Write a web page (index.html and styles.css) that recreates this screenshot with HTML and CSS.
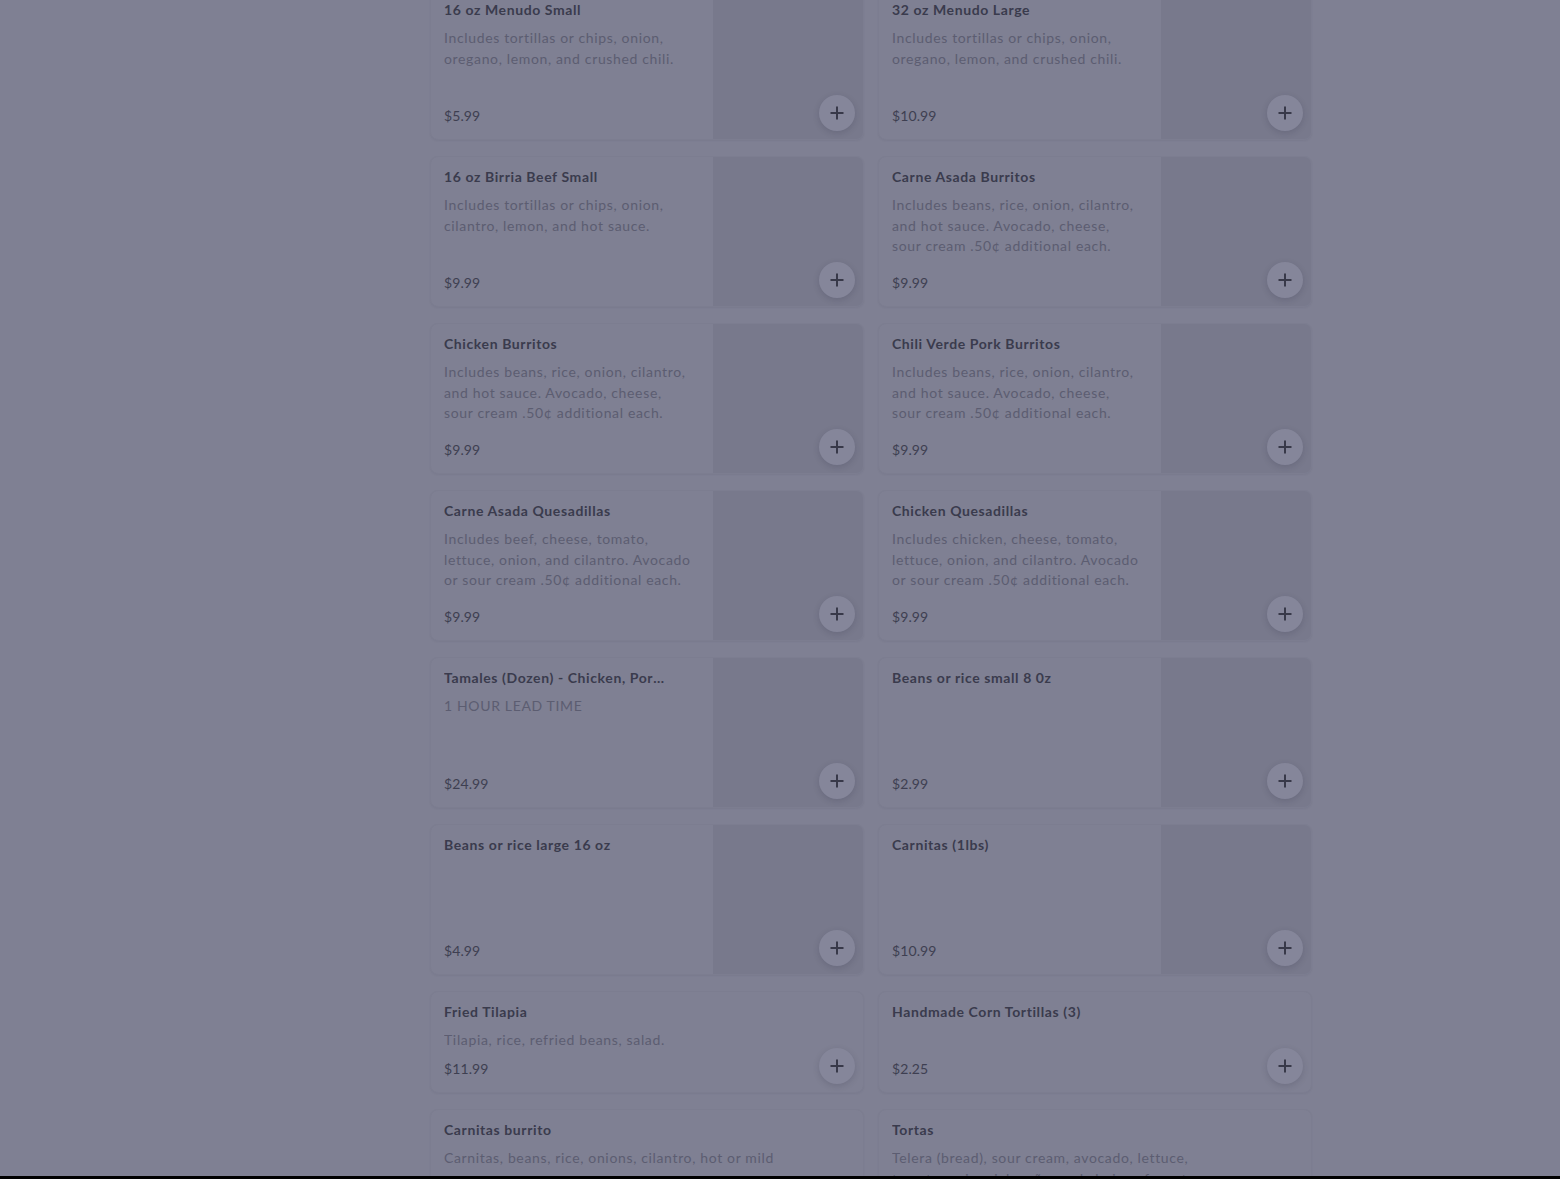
FILE: index.html
```html
<!DOCTYPE html>
<html lang="en">
<head>
<meta charset="utf-8">
<title>Menu</title>
<link rel="stylesheet" href="styles.css">
</head>
<body>
<main class="menu">
  <div class="card has-img">
    <div class="info"><h3 class="title">16 oz Menudo Small</h3><p class="desc">Includes tortillas or chips, onion, oregano, lemon, and crushed chili.</p><span class="price">$5.99</span></div>
    <div class="img"></div>
    <button class="add"><svg viewBox="0 0 16 16"><path d="M8 1.5v13M1.5 8h13"/></svg></button>
  </div>
  <div class="card has-img">
    <div class="info"><h3 class="title">32 oz Menudo Large</h3><p class="desc">Includes tortillas or chips, onion, oregano, lemon, and crushed chili.</p><span class="price">$10.99</span></div>
    <div class="img"></div>
    <button class="add"><svg viewBox="0 0 16 16"><path d="M8 1.5v13M1.5 8h13"/></svg></button>
  </div>

  <div class="card has-img">
    <div class="info"><h3 class="title">16 oz Birria Beef Small</h3><p class="desc">Includes tortillas or chips, onion, cilantro, lemon, and hot sauce.</p><span class="price">$9.99</span></div>
    <div class="img"></div>
    <button class="add"><svg viewBox="0 0 16 16"><path d="M8 1.5v13M1.5 8h13"/></svg></button>
  </div>
  <div class="card has-img">
    <div class="info"><h3 class="title">Carne Asada Burritos</h3><p class="desc">Includes beans, rice, onion, cilantro, and hot sauce. Avocado, cheese, sour cream .50¢ additional each.</p><span class="price">$9.99</span></div>
    <div class="img"></div>
    <button class="add"><svg viewBox="0 0 16 16"><path d="M8 1.5v13M1.5 8h13"/></svg></button>
  </div>

  <div class="card has-img">
    <div class="info"><h3 class="title">Chicken Burritos</h3><p class="desc">Includes beans, rice, onion, cilantro, and hot sauce. Avocado, cheese, sour cream .50¢ additional each.</p><span class="price">$9.99</span></div>
    <div class="img"></div>
    <button class="add"><svg viewBox="0 0 16 16"><path d="M8 1.5v13M1.5 8h13"/></svg></button>
  </div>
  <div class="card has-img">
    <div class="info"><h3 class="title">Chili Verde Pork Burritos</h3><p class="desc">Includes beans, rice, onion, cilantro, and hot sauce. Avocado, cheese, sour cream .50¢ additional each.</p><span class="price">$9.99</span></div>
    <div class="img"></div>
    <button class="add"><svg viewBox="0 0 16 16"><path d="M8 1.5v13M1.5 8h13"/></svg></button>
  </div>

  <div class="card has-img">
    <div class="info"><h3 class="title">Carne Asada Quesadillas</h3><p class="desc">Includes beef, cheese, tomato, lettuce, onion, and cilantro. Avocado or sour cream .50¢ additional each.</p><span class="price">$9.99</span></div>
    <div class="img"></div>
    <button class="add"><svg viewBox="0 0 16 16"><path d="M8 1.5v13M1.5 8h13"/></svg></button>
  </div>
  <div class="card has-img">
    <div class="info"><h3 class="title">Chicken Quesadillas</h3><p class="desc">Includes chicken, cheese, tomato, lettuce, onion, and cilantro. Avocado or sour cream .50¢ additional each.</p><span class="price">$9.99</span></div>
    <div class="img"></div>
    <button class="add"><svg viewBox="0 0 16 16"><path d="M8 1.5v13M1.5 8h13"/></svg></button>
  </div>

  <div class="card has-img">
    <div class="info"><h3 class="title">Tamales (Dozen) - Chicken, Pork, Cheese</h3><p class="desc">1 HOUR LEAD TIME</p><span class="price">$24.99</span></div>
    <div class="img"></div>
    <button class="add"><svg viewBox="0 0 16 16"><path d="M8 1.5v13M1.5 8h13"/></svg></button>
  </div>
  <div class="card has-img">
    <div class="info"><h3 class="title">Beans or rice small 8 0z</h3><span class="price">$2.99</span></div>
    <div class="img"></div>
    <button class="add"><svg viewBox="0 0 16 16"><path d="M8 1.5v13M1.5 8h13"/></svg></button>
  </div>

  <div class="card has-img">
    <div class="info"><h3 class="title">Beans or rice large 16 oz</h3><span class="price">$4.99</span></div>
    <div class="img"></div>
    <button class="add"><svg viewBox="0 0 16 16"><path d="M8 1.5v13M1.5 8h13"/></svg></button>
  </div>
  <div class="card has-img">
    <div class="info"><h3 class="title">Carnitas (1lbs)</h3><span class="price">$10.99</span></div>
    <div class="img"></div>
    <button class="add"><svg viewBox="0 0 16 16"><path d="M8 1.5v13M1.5 8h13"/></svg></button>
  </div>

  <div class="card">
    <div class="info"><h3 class="title">Fried Tilapia</h3><p class="desc">Tilapia, rice, refried beans, salad.</p><span class="price">$11.99</span></div>
    <button class="add"><svg viewBox="0 0 16 16"><path d="M8 1.5v13M1.5 8h13"/></svg></button>
  </div>
  <div class="card">
    <div class="info"><h3 class="title">Handmade Corn Tortillas (3)</h3><span class="price">$2.25</span></div>
    <button class="add"><svg viewBox="0 0 16 16"><path d="M8 1.5v13M1.5 8h13"/></svg></button>
  </div>

  <div class="card">
    <div class="info"><h3 class="title">Carnitas burrito</h3><p class="desc">Carnitas, beans, rice, onions, cilantro, hot or mild sauce.</p><span class="price">$9.99</span></div>
    <button class="add"><svg viewBox="0 0 16 16"><path d="M8 1.5v13M1.5 8h13"/></svg></button>
  </div>
  <div class="card">
    <div class="info"><h3 class="title">Tortas</h3><p class="desc">Telera (bread), sour cream, avocado, lettuce, tomato, onion, jalapeño, and choice of meat.</p><span class="price">$10.99</span></div>
    <button class="add"><svg viewBox="0 0 16 16"><path d="M8 1.5v13M1.5 8h13"/></svg></button>
  </div>
</main>
<div class="bottom-edge"></div>
</body>
</html>
```

FILE: styles.css
```css
* { box-sizing: border-box; }
html, body { margin: 0; padding: 0; }
body {
  background: #7f8093;
  font-family: Lato, "Open Sans", sans-serif;
  overflow: hidden;
  height: 1179px;
}
.menu {
  display: grid;
  grid-template-columns: 434px 434px;
  column-gap: 14px;
  row-gap: 16px;
  margin: -11px 0 0 430px;
}
.card {
  position: relative;
  display: flex;
  min-height: 102px;
  border: 1px solid #7c7d90;
  border-radius: 8px;
  background: #7f8093;
  box-shadow: 0 1px 2px rgba(40, 40, 60, 0.06);
  overflow: hidden;
}
.card.has-img { height: 151px; }
.info {
  flex: 1;
  min-width: 0;
  display: flex;
  flex-direction: column;
  padding: 10px 14px 13px 13px;
}
.has-img .info { padding-right: 19px; }
.title {
  margin: 0;
  font-size: 14px;
  line-height: 20px;
  font-weight: 700;
  letter-spacing: 0.6px;
  color: #3a3b4d;
  white-space: nowrap;
  overflow: hidden;
  text-overflow: ellipsis;
}
.has-img .title { max-width: 228px; }
.desc {
  margin: 8px 0 0;
  font-size: 14px;
  line-height: 20.5px;
  letter-spacing: 0.65px;
  color: #5c5d71;
  max-width: 340px;
  display: -webkit-box;
  -webkit-line-clamp: 3;
  -webkit-box-orient: vertical;
  overflow: hidden;
}
.price {
  margin-top: auto;
  padding-top: 8px;
  font-size: 14px;
  line-height: 20px;
  letter-spacing: 0.1px;
  color: #3e3f51;
}
.img {
  flex: 0 0 150px;
  background: #78798c;
}
.add {
  position: absolute;
  right: 8px;
  bottom: 8px;
  width: 36px;
  height: 36px;
  border: none;
  border-radius: 50%;
  background: #85869a;
  box-shadow: 0 2px 6px rgba(40, 40, 60, 0.18);
  display: flex;
  align-items: center;
  justify-content: center;
  padding: 0;
}
.add svg {
  width: 16px;
  height: 16px;
  fill: none;
  stroke: #383949;
  stroke-width: 2;
}
.bottom-edge {
  position: fixed;
  left: 0;
  right: 0;
  bottom: 0;
  height: 3px;
  background: #000;
}
```
